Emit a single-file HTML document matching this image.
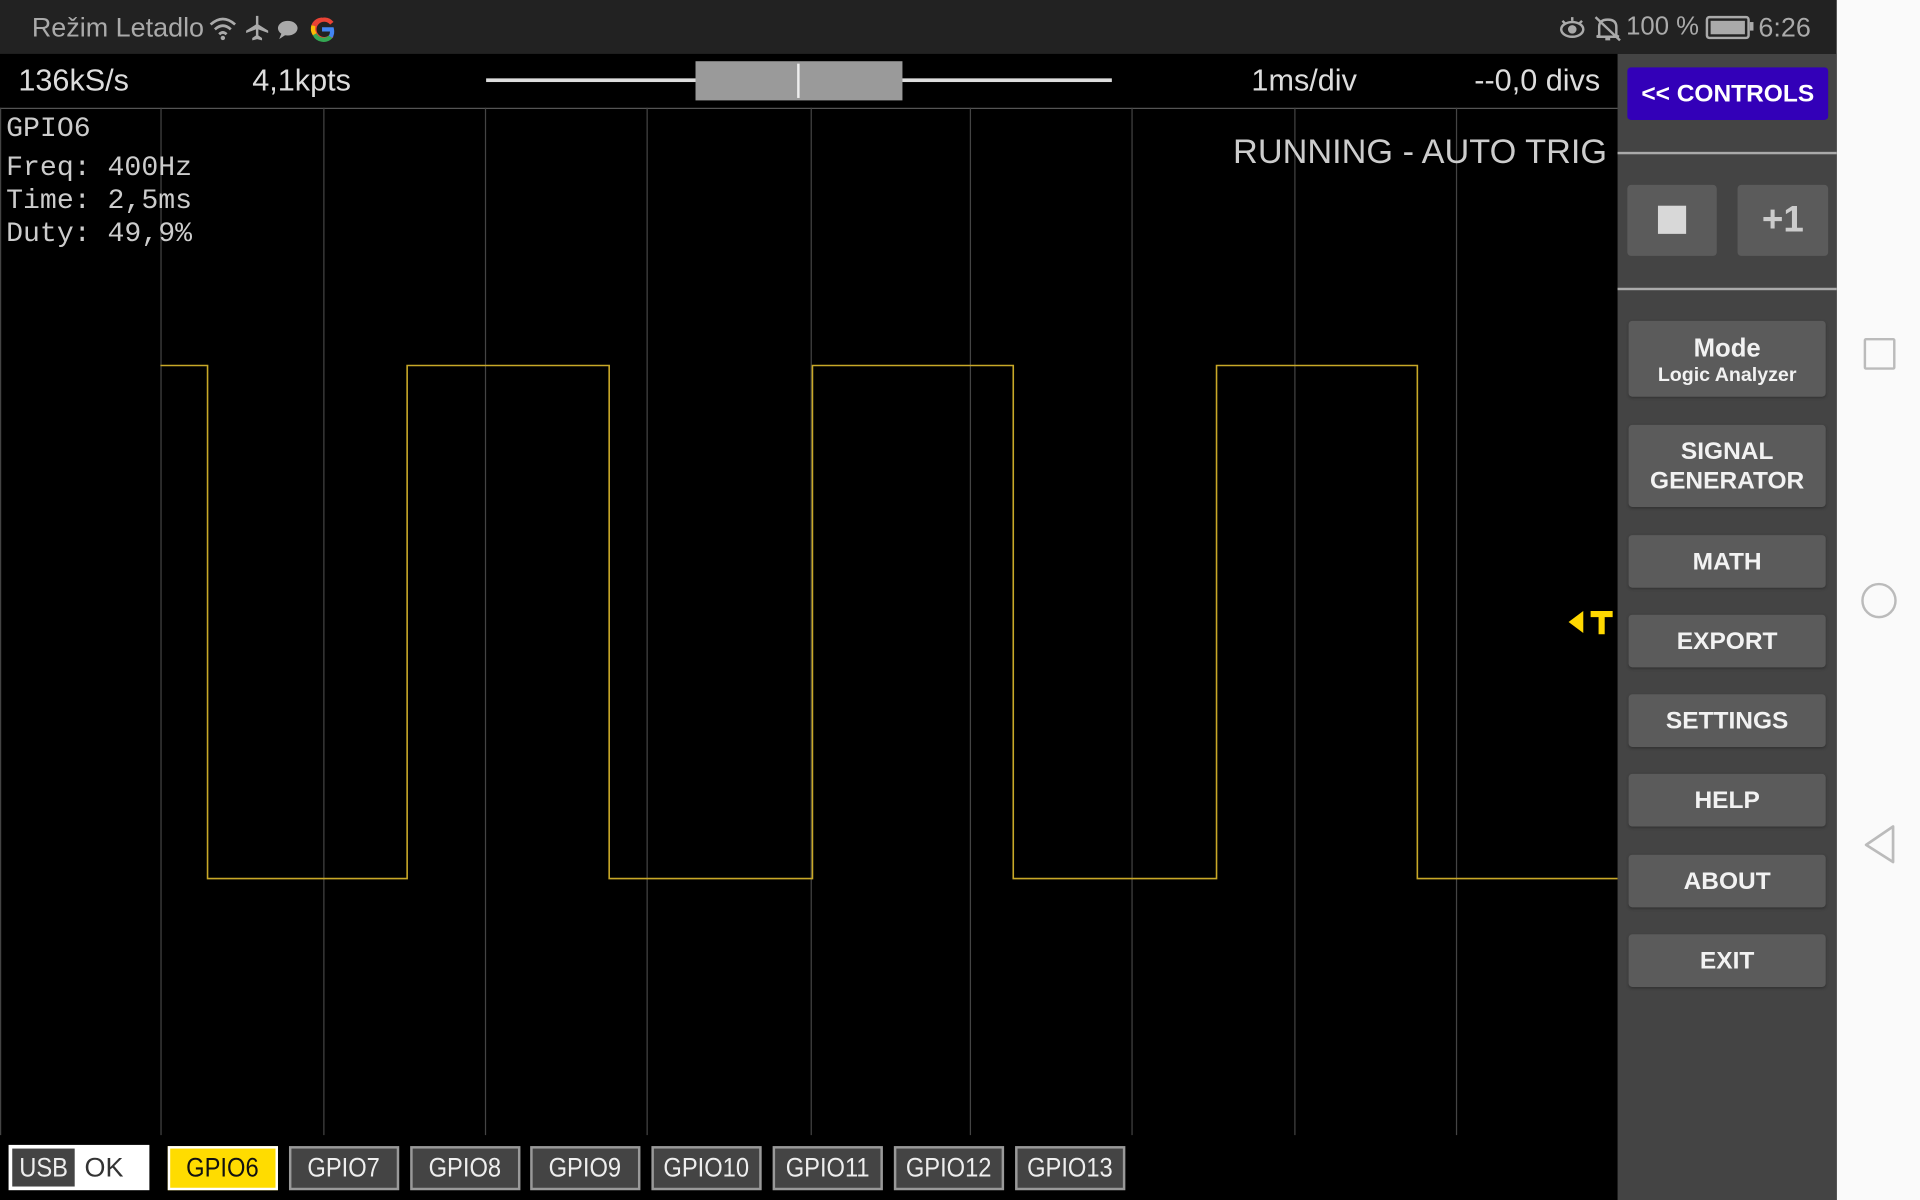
<!DOCTYPE html>
<html><head><meta charset="utf-8">
<style>
html,body{margin:0;padding:0;width:1920px;height:1200px;overflow:hidden;background:#000;}
#w{position:absolute;left:0;top:0;width:1568px;height:980px;transform:scale(1.22449);transform-origin:0 0;font-family:"Liberation Sans",sans-serif;background:#000;}
.a{position:absolute;}
.sb{left:0;top:0;width:1500px;height:44px;background:#222;color:#aaa;font-size:21px;}
.nav{left:1500px;top:0;width:68px;height:980px;background:#fafafa;}
.top{color:#ddd;font-size:25px;top:52px;white-space:nowrap;}
.gl{top:88px;width:1px;height:839px;background:#444;}
.panel{left:1321px;top:44px;width:179px;height:936px;background:#444;}
.btn{position:absolute;left:1330px;width:161px;background:#5b5b5b;border-radius:3px;color:#f2f2f2;font-weight:bold;font-size:20px;text-align:center;box-shadow:0 1px 2px #333;}
.g{position:absolute;top:936px;width:86px;height:32px;border:2px solid #999;background:#444;color:#eee;font-size:22px;text-align:center;line-height:32px;}
.g span{display:inline-block;transform:scaleX(.88);}
.mono{font-family:"Liberation Mono",monospace;color:#ccc;font-size:23px;left:5px;}
</style></head><body><div id="w">
<div class="a sb">
 <div class="a" style="left:26px;top:10px;font-size:22px;">Režim Letadlo</div>
 <svg class="a" style="left:170px;top:12px" width="110" height="24" viewBox="0 0 110 24">
  <path d="M2 8 Q12 -1 22 8" stroke="#aaa" stroke-width="2.2" fill="none"/><path d="M5.5 12 Q12 6 18.5 12" stroke="#aaa" stroke-width="2.2" fill="none"/><path d="M9 16 Q12 13 15 16" stroke="#aaa" stroke-width="2.2" fill="none"/><circle cx="12" cy="19" r="1.8" fill="#aaa"/>
  <path d="M39 1 L41 1 L41 8 L49 13 L49 15 L41 12 L41 17 L44 19 L44 21 L40 20 L36 21 L36 19 L39 17 L39 12 L31 15 L31 13 L39 8Z" fill="#aaa"/>
  <ellipse cx="65" cy="11" rx="8" ry="6" fill="#aaa"/><path d="M60 15 L58 20 L64 16Z" fill="#aaa"/>
  <path d="M101 7 A8 8 0 1 0 101 17" stroke="#ea4335" stroke-width="3.5" fill="none"/>
  <path d="M93 4 A8 8 0 0 0 86 9" stroke="#ea4335" stroke-width="3.5" fill="none"/>
  <path d="M86 9 A8 8 0 0 0 87 16" stroke="#fbbc05" stroke-width="3.5" fill="none"/>
  <path d="M87 16 A8 8 0 0 0 100 18" stroke="#34a853" stroke-width="3.5" fill="none"/>
  <path d="M93 12 H101 A8 8 0 0 1 100 18" stroke="#4285f4" stroke-width="3.5" fill="none"/>
 </svg>
 <svg class="a" style="left:1272px;top:12px" width="200" height="22" viewBox="0 0 200 22">
  <ellipse cx="12" cy="12" rx="9" ry="6" stroke="#aaa" stroke-width="2" fill="none"/><circle cx="12" cy="12" r="3.5" fill="#aaa"/><path d="M4 5 L6 7 M12 2 L12 5 M20 5 L18 7" stroke="#aaa" stroke-width="2"/>
  <path d="M34 17 L34 10 Q34 4 41 4 Q48 4 48 10 L48 17 L50 18 L32 18Z M39 20 L43 20" stroke="#aaa" stroke-width="2" fill="none"/><path d="M31 2 L51 21" stroke="#aaa" stroke-width="2"/>
 </svg>
 <div class="a" style="left:1328px;top:10px;">100 %</div>
 <div class="a" style="left:1393px;top:13px;width:32px;height:15px;border:2px solid #aaa;border-radius:3px;"><div style="margin:2px;height:11px;background:#aaa;"></div></div>
 <div class="a" style="left:1429px;top:18px;width:3px;height:7px;background:#aaa;"></div>
 <div class="a" style="left:1436px;top:10px;font-size:22px;">6:26</div>
</div>
<div class="a nav">
 <div class="a" style="left:22px;top:276px;width:22px;height:22px;border:2px solid #bbb;border-radius:2px;"></div>
 <div class="a" style="left:20px;top:476px;width:25px;height:25px;border:2px solid #bbb;border-radius:50%;"></div>
 <svg class="a" style="left:20px;top:673px" width="30" height="34"><path d="M26 2 L4 17 L26 31Z" stroke="#bbb" stroke-width="2.2" fill="none" stroke-linejoin="round"/></svg>
</div>
<div class="a top" style="left:15px;">136kS/s</div>
<div class="a top" style="left:206px;">4,1kpts</div>
<div class="a top" style="left:1022px;">1ms/div</div>
<div class="a top" style="left:1204px;">--0,0 divs</div>
<div class="a" style="left:397px;top:64px;width:511px;height:3px;background:#ddd;"></div>
<div class="a" style="left:568px;top:50px;width:169px;height:32px;background:#9a9a9a;"></div>
<div class="a" style="left:651px;top:52px;width:2px;height:28px;background:#eee;"></div>
<div class="a" style="left:0;top:88px;width:1321px;height:1px;background:#555;"></div>
<div class="a gl" style="left:0"></div>
<div class="a gl" style="left:131px"></div><div class="a gl" style="left:264px"></div><div class="a gl" style="left:396px"></div><div class="a gl" style="left:528px"></div><div class="a gl" style="left:662px"></div><div class="a gl" style="left:792px"></div><div class="a gl" style="left:924px"></div><div class="a gl" style="left:1057px"></div><div class="a gl" style="left:1189px"></div>
<svg class="a" style="left:0;top:0" width="1321" height="980"><path d="M131 298.5 H169.5 V717.5 H332.5 V298.5 H497.5 V717.5 H663.5 V298.5 H827.5 V717.5 H993.5 V298.5 H1157.5 V717.5 H1321" stroke="#c8a828" stroke-width="1.3" fill="none"/>
<path d="M1281 508 L1293 499 L1293 517Z" fill="#ffd800"/><path d="M1299 499 H1317 V504 H1310.5 V518 H1305.5 V504 H1299Z" fill="#ffd800"/></svg>
<div class="a mono" style="top:92px;">GPIO6</div>
<div class="a mono" style="top:124px;">Freq: 400Hz</div>
<div class="a mono" style="top:151px;">Time: 2,5ms</div>
<div class="a mono" style="top:178px;">Duty: 49,9%</div>
<div class="a" style="left:1007px;top:108px;color:#ccc;font-size:28px;white-space:nowrap;">RUNNING - AUTO TRIG</div>
<div class="a" style="left:7px;top:935px;width:115px;height:37px;background:#fff;"></div>
<div class="a" style="left:10px;top:938px;width:51px;height:31px;background:#444;color:#eee;font-size:22px;text-align:center;line-height:31px;"><span style="display:inline-block;transform:scaleX(.88)">USB</span></div>
<div class="a" style="left:69px;top:938px;color:#333;font-size:22px;line-height:31px;">OK</div>
<div class="g" style="left:137px;background:#ffdc00;border-color:#fff;color:#111;"><span>GPIO6</span></div>
<div class="g" style="left:236px"><span>GPIO7</span></div>
<div class="g" style="left:335px"><span>GPIO8</span></div>
<div class="g" style="left:433px"><span>GPIO9</span></div>
<div class="g" style="left:532px"><span>GPIO10</span></div>
<div class="g" style="left:631px"><span>GPIO11</span></div>
<div class="g" style="left:730px"><span>GPIO12</span></div>
<div class="g" style="left:829px"><span>GPIO13</span></div>
<div class="a panel"></div>
<div class="a" style="left:1329px;top:55px;width:164px;height:43px;background:#3300b8;border-radius:3px;color:#fff;font-weight:bold;font-size:20px;text-align:center;line-height:44px;">&lt;&lt; CONTROLS</div>
<div class="a" style="left:1321px;top:124px;width:179px;height:2px;background:#aaa;"></div>
<div class="a" style="left:1321px;top:235px;width:179px;height:2px;background:#aaa;"></div>
<div class="a" style="left:1329px;top:151px;width:73px;height:58px;background:#5b5b5b;border-radius:3px;"><div style="margin:17px auto 0;width:23px;height:23px;background:#d8d8d8;"></div></div>
<div class="a" style="left:1419px;top:151px;width:74px;height:58px;background:#5b5b5b;border-radius:3px;color:#ccc;font-weight:bold;font-size:30px;text-align:center;line-height:58px;">+1</div>
<div class="btn" style="top:262px;height:62px;"><div style="margin-top:11px;font-size:21px;">Mode</div><div style="font-size:16px;margin-top:1px;">Logic Analyzer</div></div>
<div class="btn" style="top:347px;height:67px;line-height:24px;"><div style="margin-top:10px;">SIGNAL<br>GENERATOR</div></div>
<div class="btn" style="top:437px;height:43px;line-height:44px;">MATH</div>
<div class="btn" style="top:502px;height:43px;line-height:44px;">EXPORT</div>
<div class="btn" style="top:567px;height:43px;line-height:44px;">SETTINGS</div>
<div class="btn" style="top:632px;height:43px;line-height:44px;">HELP</div>
<div class="btn" style="top:698px;height:43px;line-height:44px;">ABOUT</div>
<div class="btn" style="top:763px;height:43px;line-height:44px;">EXIT</div>
</div></body></html>
